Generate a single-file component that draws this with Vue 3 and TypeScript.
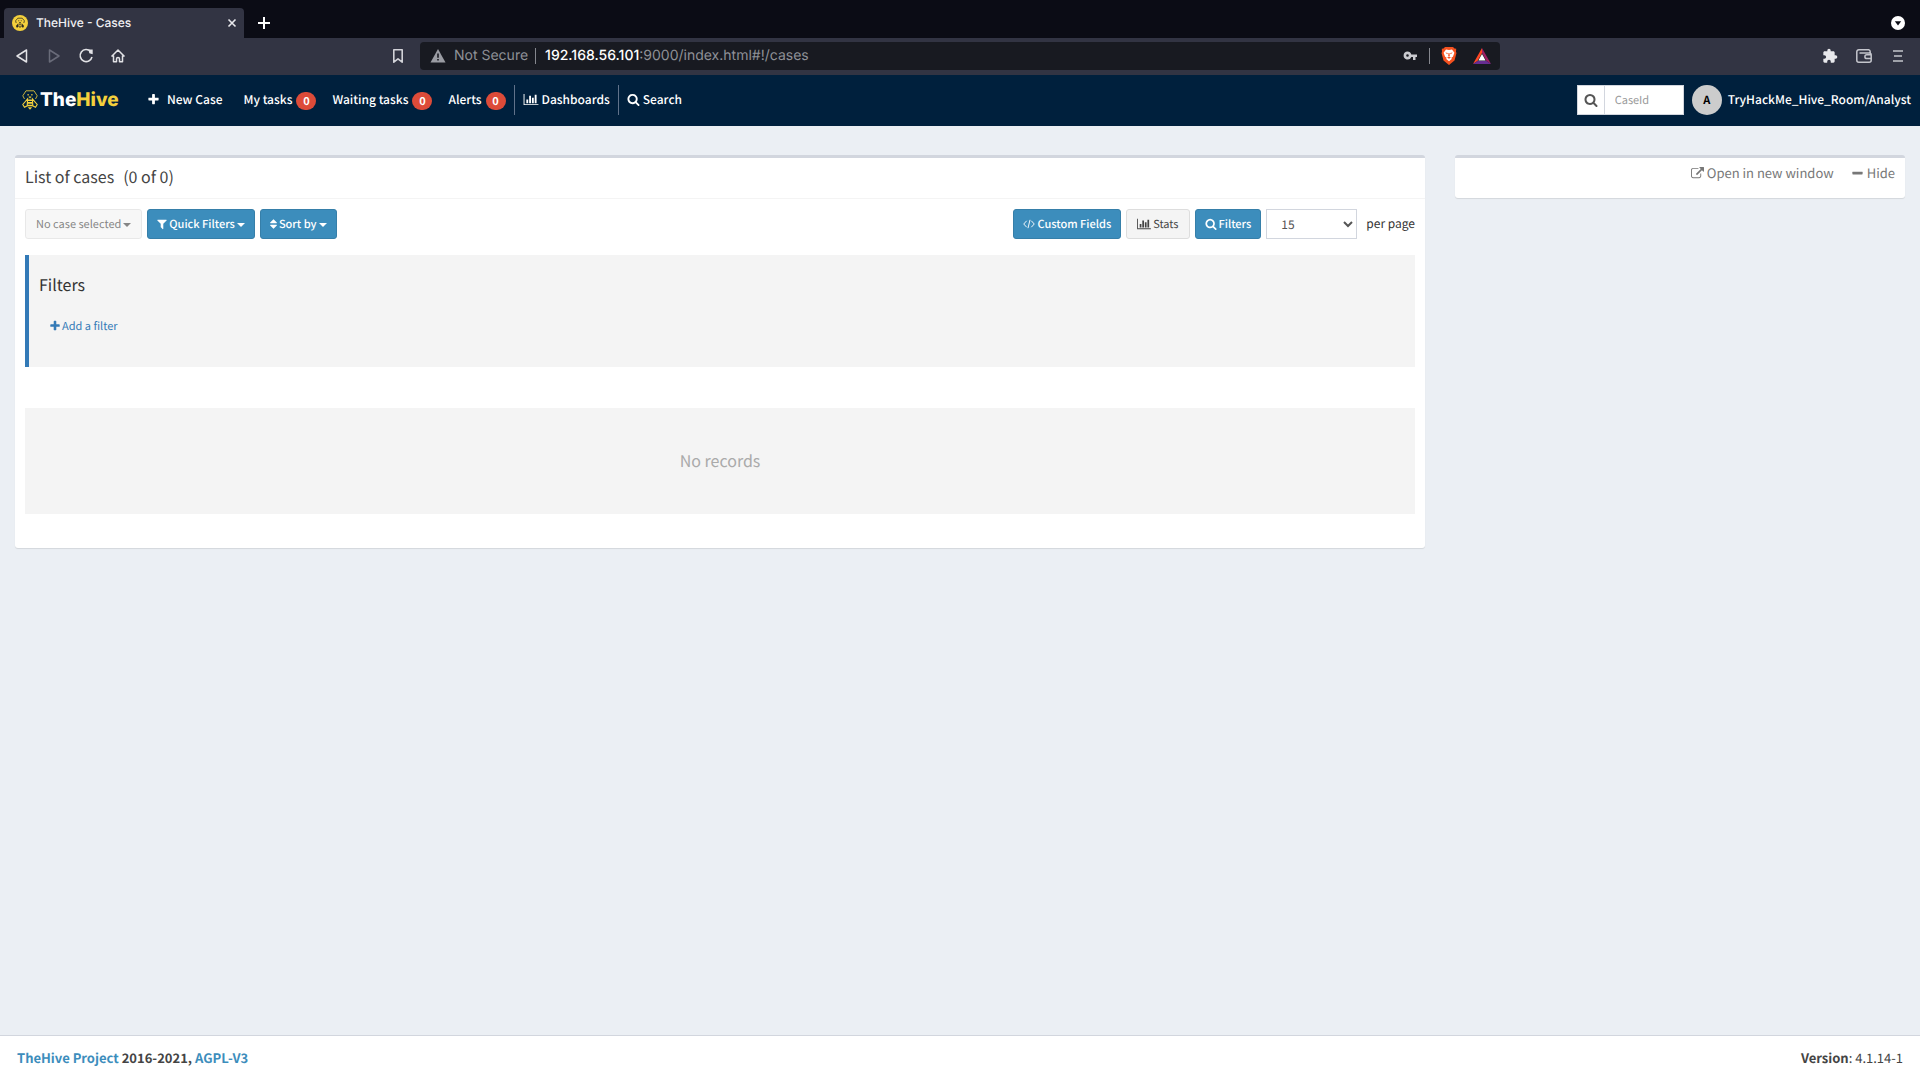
<script setup lang="ts">
import { ref } from 'vue'

interface NavItem {
  label: string
  count: number
}

const taskLinks: NavItem[] = [
  { label: 'My tasks', count: 0 },
  { label: 'Waiting tasks', count: 0 },
  { label: 'Alerts', count: 0 },
]

const pageSizes: number[] = [15, 30, 50, 100]
const pageSize = ref<number>(15)
const caseId = ref<string>('')

const icons = {
  plus: 'M1600 736v192q0 40-28 68t-68 28h-416v416q0 40-28 68t-68 28h-192q-40 0-68-28t-28-68v-416h-416q-40 0-68-28t-28-68v-192q0-40 28-68t68-28h416v-416q0-40 28-68t68-28h192q40 0 68 28t28 68v416h416q40 0 68 28t28 68z',
  chart: 'M640 896v512h-256v-512h256zm384-512v1024h-256v-1024h256zm1024 1152v128h-2048v-1536h128v1408h1920zm-640-896v768h-256v-768h256zm384-384v1152h-256v-1152h256z',
  search: 'M1216 832q0-185-131.5-316.5t-316.5-131.5-316.5 131.5-131.5 316.5 131.5 316.5 316.5 131.5 316.5-131.5 131.5-316.5zm512 832q0 52-38 90t-90 38q-54 0-90-38l-343-342q-179 124-399 124-143 0-273.5-55.5t-225-150-150-225-55.5-273.5 55.5-273.5 150-225 225-150 273.5-55.5 273.5 55.5 225 150 150 225 55.5 273.5q0 220-124 399l343 343q37 37 37 90z',
  filter: 'M1595 295q17 41-14 70l-493 493v742q0 42-39 59-13 5-25 5-27 0-45-19l-256-256q-19-19-19-45v-486l-493-493q-31-29-14-70 17-39 59-39h1280q42 0 59 39z',
  sort: 'M1408 1088q0 26-19 45l-448 448q-19 19-45 19t-45-19l-448-448q-19-19-19-45t19-45 45-19h896q26 0 45 19t19 45zm0-384q0 26-19 45t-45 19h-896q-26 0-45-19t-19-45 19-45l448-448q19-19 45-19t45 19l448 448q19 19 19 45z',
  external: 'M1408 928v320q0 119-84.5 203.5t-203.5 84.5h-832q-119 0-203.5-84.5t-84.5-203.5v-832q0-119 84.5-203.5t203.5-84.5h704q14 0 23 9t9 23v64q0 14-9 23t-23 9h-704q-66 0-113 47t-47 113v832q0 66 47 113t113 47h832q66 0 113-47t47-113v-320q0-14 9-23t23-9h64q14 0 23 9t9 23zm384-864v512q0 26-19 45t-45 19-45-19l-176-176-652 652q-10 10-23 10t-23-10l-114-114q-10-10-10-23t10-23l652-652-176-176q-19-19-19-45t19-45 45-19h512q26 0 45 19t19 45z',
  minus: 'M1600 736v192q0 40-28 68t-68 28h-1216q-40 0-68-28t-28-68v-192q0-40 28-68t68-28h1216q40 0 68 28t28 68z',
}
</script>

<template>
  <div class="page">
    <div class="tabs">
      <div class="tab">
        <svg class="favicon" viewBox="0 0 16 16" aria-hidden="true">
          <circle cx="8" cy="8" r="8" fill="#f4d03c" />
          <path d="M4.200 8 3.600 5.800 5.800 3.200h4.400l2.200 2.600L11.800 8" fill="none" stroke="#5a5228" />
          <path d="M6.400 5.200h.8v1h-.8zM8.800 5.200h.8v1h-.8zM7.300 7h1.400v1.500H7.300zM6.300 8.300 3.900 11l1 1.800 1.700-1.100zM9.700 8.300l2.400 2.700-1 1.800-1.700-1.100zM7.200 9.300h1.600v1H7.200zM7.200 11.200h1.600v1.300H7.200z" fill="#2c2a22" />
        </svg>
        <span class="tab-title">TheHive - Cases</span>
        <button class="plain" aria-label="Close tab">
          <svg width="10" height="10" viewBox="0 0 10 10"><path d="M1.500 1.500l7 7m0-7l-7 7" stroke="#e8e8ec" stroke-width="1.600" fill="none" /></svg>
        </button>
      </div>
      <button class="plain new-tab" aria-label="New tab">
        <svg width="14" height="14" viewBox="0 0 14 14"><path d="M7 1v12M1 7h12" stroke="#fff" stroke-width="2" fill="none" /></svg>
      </button>
      <button class="plain tab-search" aria-label="Search tabs">
        <svg width="14" height="14" viewBox="0 0 14 14"><circle cx="7" cy="7" r="7" fill="#fff" /><path d="M3.800 5.200h6.400L7 9.400z" fill="#0b0c15" /></svg>
      </button>
    </div>

    <div class="toolbar">
      <div class="tool-left">
        <button class="plain" aria-label="Back">
          <svg width="16" height="16" viewBox="0 0 16 16"><path d="M12.500 2v12L3 8z" fill="none" stroke="#e2e2e6" stroke-width="1.500" stroke-linejoin="round" /></svg>
        </button>
        <button class="plain" aria-label="Forward" disabled>
          <svg width="16" height="16" viewBox="0 0 16 16"><path d="M3.500 2v12L13 8z" fill="none" stroke="#696b79" stroke-width="1.500" stroke-linejoin="round" /></svg>
        </button>
        <button class="plain" aria-label="Reload">
          <svg width="16" height="16" viewBox="0 0 16 16"><path d="M12.600 3.500A6 6 0 1 0 14 9" fill="none" stroke="#e2e2e6" stroke-width="1.600" /><path d="M10.500 1.600h4.200v4.600l-3.400-.9z" fill="#e2e2e6" /></svg>
        </button>
        <button class="plain" aria-label="Home">
          <svg width="16" height="16" viewBox="0 0 16 16"><path d="M1.500 8.500 8 2l6.500 6.500M3.500 7.500v6.300h3V11a1.500 1.500 0 0 1 3 0v2.800h3V7.500" fill="none" stroke="#e2e2e6" stroke-width="1.500" stroke-linejoin="round" /></svg>
        </button>
        <button class="plain bookmark" aria-label="Bookmark">
          <svg width="16" height="16" viewBox="0 0 16 16"><path d="M3.800 1.800h8.400v12.400L8 10.800l-4.200 3.400z" fill="none" stroke="#d2d2d8" stroke-width="1.600" stroke-linejoin="round" /></svg>
        </button>
      </div>
      <div class="address">
        <svg width="16" height="14" viewBox="0 0 16 14" aria-hidden="true"><path d="M8 0l7.500 13.500H.5z" fill="#9a9ca3" /><path d="M7.200 4.500h1.600v4.200H7.200zM7.200 10h1.600v1.600H7.200z" fill="#181a21" /></svg>
        <span class="insecure">Not Secure</span>
        <span class="bar"></span>
        <a class="url" href="#!/cases"><b>192.168.56.101</b>:9000/index.html#!/cases</a>
        <svg class="key" width="14" height="10" viewBox="0 0 14 10" aria-label="Saved passwords"><path d="M4.500.5a4 4 0 1 0 3.800 5.500H10v3h2.500V6H14V3.500H8.300A4 4 0 0 0 4.500.5zm0 2.700a1.300 1.300 0 1 1 0 2.600 1.300 1.300 0 0 1 0-2.600z" fill="#c9cacf" /></svg>
        <span class="bar"></span>
        <svg class="shield" width="16" height="18" viewBox="0 0 16 18" aria-hidden="true">
          <path d="M4 0h8l1.500 1.500 1.700.300-.2 3.200.5 1-2 7.500L8 18l-5.500-4.500L.5 6 1 5 .800 1.800l1.700-.300z" fill="#f4511f" />
          <path d="M5 2.500 8 3l3-.5 2.400 3.200-1.500 4-1.400.8.200 1.500L8 14.200 5.300 12l.2-1.500-1.400-.8-1.500-4z" fill="#fff" />
          <path d="M4.300 5.500l2.500.5-.5 1.200zM11.700 5.500l-2.500.5.500 1.200zM7.500 6h1l.3 3L8 9.700 7.200 9zM6 10.500l2-.7 2 .7-2 1.200z" fill="#f4511f" />
        </svg>
        <svg width="18" height="16" viewBox="0 0 18 16" aria-hidden="true"><path d="M9 0 0 16l4.500-3L9 5z" fill="#ff4724" /><path d="M9 0l9 16-4.500-3L9 5z" fill="#9e1f63" /><path d="M0 16h18l-4.500-3h-9z" fill="#662d91" /><path d="M9 6l3.600 6.500H5.400z" fill="#fff" /></svg>
      </div>
      <div class="tool-right">
        <button class="plain" aria-label="Extensions">
          <svg width="16" height="16" viewBox="0 0 24 24"><path d="M20.500 11H19V7c0-1.100-.9-2-2-2h-4V3.500a2.500 2.500 0 0 0-5 0V5H4c-1.100 0-2 .9-2 2v3.800h1.500a2.700 2.700 0 0 1 0 5.400H2V20c0 1.100.9 2 2 2h3.800v-1.500a2.700 2.700 0 0 1 5.400 0V22H17c1.100 0 2-.9 2-2v-4h1.500a2.500 2.500 0 0 0 0-5z" fill="#e8e8ec" /></svg>
        </button>
        <button class="plain" aria-label="Wallet">
          <svg width="16" height="16" viewBox="0 0 16 16"><path d="M14.200 5V3.700a2 2 0 0 0-1.500-1.900H2.800a2 2 0 0 0-2 2v8.400a2 2 0 0 0 2 2h10.400a2 2 0 0 0 2-2V7a2 2 0 0 0-2-2H3.500M15 6.800h-4.200a1.900 1.900 0 0 0 0 3.800H15" fill="none" stroke="#c4c5cc" stroke-width="1.500" /></svg>
        </button>
        <button class="plain" aria-label="Menu">
          <svg width="16" height="16" viewBox="0 0 16 16"><path d="M3 3h10M4 8h8M3 13h10" fill="none" stroke="#c4c5cc" stroke-width="1.700" /></svg>
        </button>
      </div>
    </div>

    <header class="navbar">
      <a class="brand" href="#!/cases">
        <svg width="16" height="20" viewBox="0 0 16 20" aria-hidden="true">
          <path d="M2.500 9 .800 5.800 4 .8h8l3.200 5L13.500 9" fill="none" stroke="#c9b23c" />
          <path d="M5.500 4h1.200v1.500H5.500zM9.300 4h1.200v1.500H9.300zM6.500 6.500h3L8 8.500z" fill="#f4d03c" />
          <path d="M5.600 8.800.8 14.500l1.700 2.800 2.700-1.500zM10.400 8.800l4.800 5.700-1.700 2.800-2.700-1.500z" fill="none" stroke="#f4d03c" stroke-width="1.100" />
          <path d="M6.300 9.500h3.400l.6 1.500H5.700zM5.500 12h5l.4 1.700H5.100zM5 14.700h6l-.4 1.600H5.400zM5.800 17.200h4.400L8 19.800z" fill="#f4d03c" />
        </svg>
        <span>The<em>Hive</em></span>
      </a>
      <nav class="links">
        <a class="new-case" href="#new"><svg class="ic" viewBox="0 0 1792 1792"><path :d="icons.plus" /></svg>New Case</a>
        <a v-for="item in taskLinks" :key="item.label" href="#tasks">{{ item.label }}<span class="badge">{{ item.count }}</span></a>
        <a class="ruled" href="#dashboards"><svg class="ic wide" viewBox="0 0 2048 1792"><path :d="icons.chart" /></svg>Dashboards</a>
        <a class="ruled" href="#search"><svg class="ic" viewBox="0 0 1792 1792"><path :d="icons.search" /></svg>Search</a>
      </nav>
      <form class="case-search" @submit.prevent>
        <button aria-label="Find case"><svg class="ic" viewBox="0 0 1792 1792"><path :d="icons.search" /></svg></button>
        <input v-model="caseId" type="text" placeholder="CaseId" aria-label="CaseId" />
      </form>
      <a class="user" href="#account"><span class="avatar">A</span>TryHackMe_Hive_Room/Analyst</a>
    </header>

    <main class="content">
      <div class="col-main">
        <section class="box">
          <h3 class="box-title"><span>List of cases</span><span>(0 of 0)</span></h3>
          <div class="box-body">
            <div class="actions">
              <button class="btn default" disabled>No case selected<i class="caret"></i></button>
              <button class="btn primary"><svg class="fa narrow" viewBox="192 0 1408 1792"><path :d="icons.filter" /></svg>Quick Filters<i class="caret"></i></button>
              <button class="btn primary"><svg class="fa slim" viewBox="384 0 1024 1792"><path :d="icons.sort" /></svg>Sort by<i class="caret"></i></button>
              <button class="btn primary first-right">
                <svg class="fa" viewBox="0 0 13 12"><path d="M4 2.500.8 6 4 9.500M9 2.500 12.200 6 9 9.500M7.600 1.500l-2.200 9" fill="none" stroke="currentColor" /></svg>Custom Fields
              </button>
              <button class="btn default"><svg class="fa wide" viewBox="0 0 2048 1792"><path :d="icons.chart" /></svg>Stats</button>
              <button class="btn primary"><svg class="fa" viewBox="0 0 1792 1792"><path :d="icons.search" /></svg>Filters</button>
              <select id="page-size" v-model="pageSize">
                <option v-for="n in pageSizes" :key="n" :value="n">{{ n }}</option>
              </select>
              <label for="page-size">per page</label>
            </div>
            <div class="filter-panel">
              <h4>Filters</h4>
              <a href="#add-filter"><svg class="fa narrow" viewBox="192 0 1408 1792"><path :d="icons.plus" /></svg>Add a filter</a>
            </div>
            <div class="empty">No records</div>
          </div>
        </section>
      </div>
      <aside class="col-side">
        <div class="box side-box">
          <a href="#live"><svg class="ic" viewBox="0 0 1792 1792"><path :d="icons.external" /></svg>Open in new window</a>
          <a href="#hide"><svg class="ic" viewBox="192 0 1408 1792"><path :d="icons.minus" /></svg>Hide</a>
        </div>
      </aside>
    </main>

    <footer class="footer">
      <strong><a href="#project">TheHive Project</a> 2016-2021, <a href="#license">AGPL-V3</a></strong>
      <span><b>Version</b>: 4.1.14-1</span>
    </footer>
  </div>
</template>

<style>
body {
  background: #ebeff4;
}
</style>

<style scoped>
* {
  box-sizing: border-box;
}

.page {
  display: flex;
  flex-direction: column;
  min-height: 100vh;
  font: 13px/20px "Noto Sans CJK SC", "Noto Sans", sans-serif;
  text-rendering: geometricPrecision;
  color: #333;
}

a {
  text-decoration: none;
  color: inherit;
}

button,
input,
select {
  font-family: inherit;
  text-rendering: inherit;
}

svg {
  flex: none;
  display: block;
}

.plain {
  display: flex;
  padding: 0;
  border: 0;
  background: none;
}

.tabs {
  display: flex;
  align-items: center;
  height: 38px;
  padding: 8px 15px 0 4px;
  background: #0b0c15;
  font-family: Inter, sans-serif;
}

.tab {
  display: flex;
  align-items: center;
  width: 240px;
  height: 30px;
  padding: 0 7px 0 8px;
  border-radius: 4px 4px 0 0;
  background: #323443;
}

.favicon {
  width: 16px;
  height: 16px;
}

.tab-title {
  flex: 1;
  padding-left: 8px;
  font-size: 12px;
  font-weight: 500;
  color: #f0f0f3;
}

.new-tab {
  margin-left: 13px;
}

.tab-search {
  margin-left: auto;
}

.toolbar {
  display: flex;
  align-items: center;
  height: 37px;
  padding-bottom: 1px;
  background: #323443;
  font-family: Inter, sans-serif;
}

.tool-left {
  display: flex;
  flex: none;
  gap: 16px;
  width: 420px;
  padding: 0 14px;
}

.bookmark {
  margin-left: auto;
}

.address {
  display: flex;
  align-items: center;
  width: 1080px;
  height: 28px;
  padding: 0 9px 0 10px;
  border-radius: 4px;
  background: #181a21;
  font-size: 14px;
  line-height: 18px;
  color: #8f9197;
}

.insecure {
  padding: 0 7px 0 8px;
}

.bar {
  width: 1px;
  height: 16px;
  background: #85878e;
}

.url {
  flex: 1;
  padding-left: 9px;
}

.url b {
  font-weight: 500;
  color: #fff;
}

.key {
  margin-right: 12px;
}

.shield {
  margin: 0 16px 0 11px;
}

.tool-right {
  display: flex;
  gap: 18px;
  margin-left: auto;
  padding-right: 14px;
}

.navbar {
  display: flex;
  align-items: center;
  height: 51px;
  padding: 0 9px 2px 22px;
  background: #00203d;
  color: #fff;
  font-size: 12px;
  font-weight: 500;
}

.brand {
  display: flex;
  align-items: center;
  gap: 2px;
  width: 116px;
  font: 800 19px/24px Inter, sans-serif;
}

.brand em {
  font-style: normal;
  color: #f4d03c;
}

.links {
  display: flex;
  align-items: center;
}

.links a {
  display: flex;
  align-items: center;
  height: 30px;
  padding-right: 16px;
}

.ic {
  width: 13px;
  height: 13px;
  margin-right: 3px;
  fill: currentColor;
}

.ic.wide {
  width: 16px;
}

.links .new-case {
  padding: 0 21px 0 9px;
}

.new-case .ic {
  margin-right: 7px;
}

.badge {
  width: 20px;
  height: 18px;
  margin: 2px 0 0 4px;
  border-radius: 9px;
  background: #dd4b39;
  font-size: 11px;
  font-weight: 700;
  line-height: 18px;
  text-align: center;
}

.links .ruled {
  padding: 0 8px;
  border-left: 1px solid #60728a;
}

.links a:nth-child(4) {
  padding-right: 8px;
}

.case-search {
  display: flex;
  height: 30px;
  margin-left: auto;
  border: 1px solid #d2d6de;
  background: #fff;
}

.case-search button {
  width: 27px;
  padding: 0 0 0 6px;
  border: 0;
  border-right: 1px solid #d2d6de;
  background: #fff;
  color: #555;
}

.case-search .ic {
  width: 14px;
  height: 14px;
  margin: 0;
}

.case-search input {
  width: 78px;
  padding: 0 10px;
  border: 0;
  font-size: 11px;
}

.case-search input::placeholder {
  color: #999;
}

.user {
  display: flex;
  align-items: center;
  margin-left: 8px;
}

.avatar {
  width: 30px;
  height: 30px;
  margin-right: 6px;
  border-radius: 50%;
  background: #ccc;
  color: #000;
  font-size: 11px;
  font-weight: 700;
  line-height: 30px;
  text-align: center;
}

.content {
  display: flex;
  flex: 1;
  align-items: flex-start;
  padding-top: 29px;
  background: #ebeff4;
}

.col-main {
  width: 75%;
  padding: 0 15px;
}

.col-side {
  width: 25%;
  padding: 0 15px;
}

.box {
  border-top: 3px solid #d2d6de;
  border-radius: 3px;
  background: #fff;
  box-shadow: 0 1px 1px rgba(0, 0, 0, 0.1);
}

.box-title {
  display: flex;
  gap: 9px;
  margin: 0;
  padding: 8px 10px 12px;
  border-bottom: 1px solid #f4f4f4;
  font-size: 16px;
  font-weight: 400;
  line-height: 20px;
  color: #444;
}

.box-body {
  padding: 10px 10px 34px;
}

.actions {
  display: flex;
  align-items: center;
  gap: 5px;
}

.btn {
  display: flex;
  align-items: center;
  height: 30px;
  padding: 0 10px;
  border: 1px solid #367fa9;
  border-radius: 3px;
  font-size: 11px;
  line-height: 18px;
}

.btn.primary {
  padding: 0 9px;
  background: #3c8dbc;
  color: #fff;
  font-weight: 500;
}

.btn.default {
  border-color: #ddd;
  background: #f4f4f4;
  color: #444;
}

.btn.default:disabled {
  opacity: 0.65;
}

.caret {
  margin: 2px 0 0 2px;
  border: 4px solid transparent;
  border-top-color: currentColor;
  border-bottom: 0;
}

.fa {
  width: 12px;
  height: 12px;
  margin-right: 2px;
  fill: currentColor;
}

.fa.wide {
  width: 14px;
}

.fa.narrow {
  width: 10px;
}

.fa.slim {
  width: 7px;
}

.first-right {
  margin-left: auto;
}

select {
  width: 91px;
  height: 30px;
  padding: 0 10px;
  border: 1px solid #d2d6de;
  background: #fff;
  color: #555;
  font-size: 12px;
}

label {
  margin-left: 4px;
  font-size: 12px;
}

.filter-panel {
  margin-top: 16px;
  padding: 19px 10px 31px;
  border-left: 4px solid #337ab7;
  background: #f4f4f4;
}

.filter-panel h4 {
  margin: 0 0 22px;
  font-size: 16px;
  font-weight: 400;
  line-height: 20px;
}

.filter-panel a {
  display: flex;
  align-items: center;
  padding-left: 11px;
  font-size: 11px;
  color: #337ab7;
}

.empty {
  margin-top: 41px;
  padding: 42px 0 44px;
  background: #f4f4f4;
  color: #aaa;
  font-size: 16px;
  line-height: 20px;
  text-align: center;
}

.side-box {
  display: flex;
  justify-content: flex-end;
  gap: 17px;
  padding: 5px 10px 15px;
  color: #777;
}

.side-box a {
  display: flex;
  align-items: center;
}

.footer {
  display: flex;
  align-items: center;
  justify-content: space-between;
  height: 45px;
  padding: 0 17px;
  border-top: 1px solid #d2d6de;
  background: #fff;
  color: #444;
}

.footer strong a {
  color: #3c8dbc;
}
</style>
